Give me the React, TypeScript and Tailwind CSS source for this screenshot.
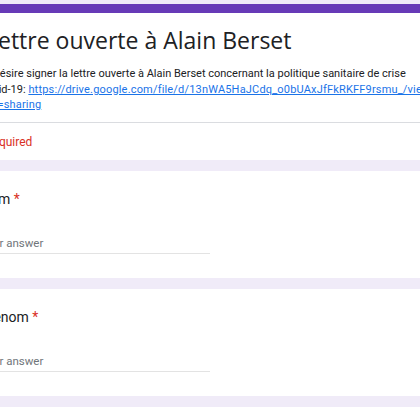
import React from "react";

function Question({ label }: { label: string }) {
  return (
    <div className="bg-white h-[107px] pl-[2px] pt-[18px]">
      <div className="text-[14px] leading-[20px] text-[#202124]">
        {label} <span className="text-[#d93025]">*</span>
      </div>
      <div className="mt-[26px] w-[230px] border-b border-[#e3e3e3] pb-[2px]">
        <div className="text-[11.5px] leading-[16px] text-[#70757a]">Your answer</div>
      </div>
    </div>
  );
}

export default function App() {
  return (
    <div
      className="w-[420px] h-[420px] overflow-hidden bg-[#f0ebf8]"
      style={{ fontFamily: "Roboto, 'Liberation Sans', sans-serif" }}
    >
      <div className="-ml-[22px] w-[500px] pt-[4px] flex flex-col gap-[11px]">
        <div className="bg-white h-[156px] flex flex-col">
          <div className="h-[9px] bg-[#673ab7]" />
          <div className="h-[109px] pl-[2px] pt-[11px]">
            <div
              className="ml-[6px] text-[23px] leading-[32px] text-[#202124]"
              style={{ fontFamily: "'Open Sans', Roboto, sans-serif" }}
            >
              Lettre ouverte à Alain Berset
            </div>
            <div className="mt-[10px] -ml-[1px] text-[11px] leading-[15.5px] text-[#202124]">
              Je désire signer la lettre ouverte à Alain Berset concernant la politique sanitaire de crise
              <br />
              <span className="ml-[1px]">Covid-19:</span>{" "}
              <span className="text-[#1a73e8] underline tracking-[0.18px]">
                https://drive.google.com/file/d/13nWA5HaJCdq_o0bUAxJfFkRKFF9rsmu_/view?
                <br />
                usp=sharing
              </span>
            </div>
          </div>
          <div className="border-t border-[#dadce0] flex-1 flex items-center -ml-[1px] text-[12px] text-[#d93025]">
            * Required
          </div>
        </div>
        <Question label="Nom" />
        <Question label="Prénom" />
        <div className="bg-white h-[60px]" />
      </div>
    </div>
  );
}
